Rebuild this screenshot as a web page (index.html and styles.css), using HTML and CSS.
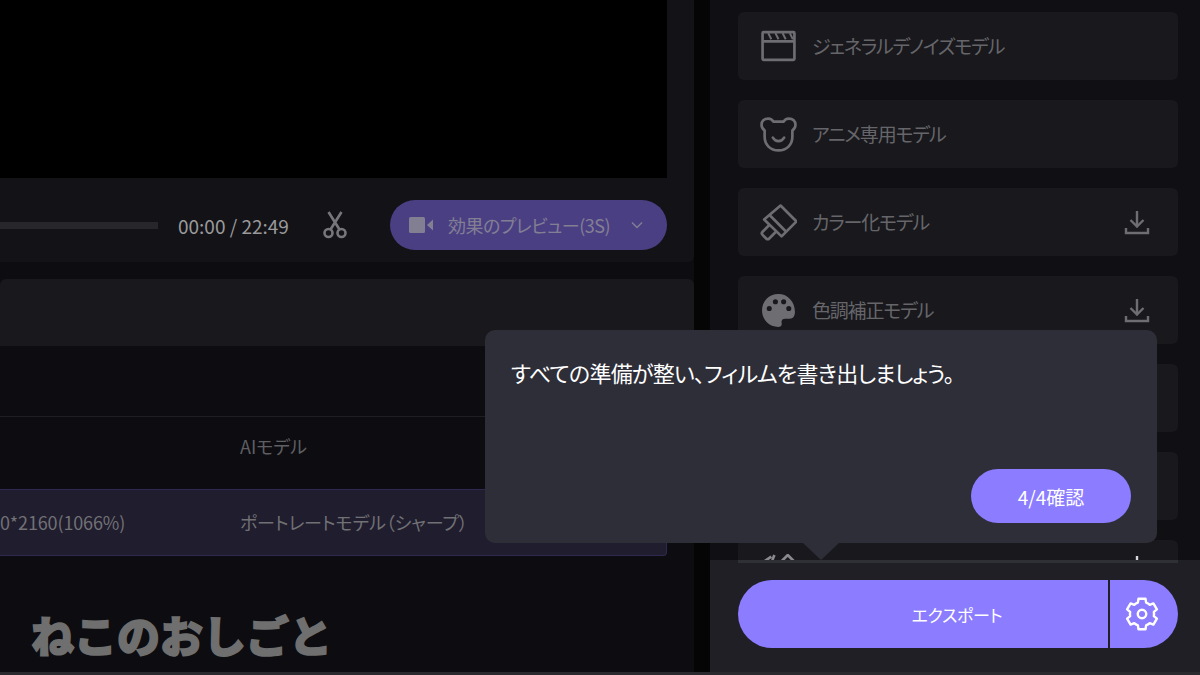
FILE: index.html
```html
<!DOCTYPE html>
<html lang="ja">
<head>
    <meta charset="UTF-8">
    <title>エクスポート</title>
    <link rel="stylesheet" href="styles.css">
</head>
<body>
    <div class="app">
        <div class="left">
            <div class="player">
                <div class="video"></div>
                <div class="controls">
                    <div class="progress"></div>
                    <span class="time">00:00 / 22:49</span>
                    <svg class="scissors" viewBox="0 0 28 28" fill="none" stroke="#77777b" stroke-width="2.6">
                        <circle cx="7.5" cy="22" r="4"/>
                        <circle cx="20.5" cy="22" r="4"/>
                        <path d="M9.5 18.5 20.5 1M18.5 18.5 7.5 1"/>
                    </svg>
                    <div class="preview">
                        <svg class="cam" viewBox="0 0 24 16" fill="#827f93">
                            <rect x="0" y="0" width="16" height="16" rx="1.5"/>
                            <path d="M18 8 24 2.5V13.5Z"/>
                        </svg>
                        <span class="preview-text">効果のプレビュー(3S)</span>
                        <svg class="chev" viewBox="0 0 12 8" fill="none" stroke="#827f93" stroke-width="1.4">
                            <path d="M1 1.5 6 6.5 11 1.5"/>
                        </svg>
                    </div>
                </div>
            </div>
            <div class="toolbar"></div>
            <div class="table">
                <div class="table-blank"></div>
                <div class="table-head">
                    <span class="cell-res"></span>
                    <span>AIモデル</span>
                </div>
                <div class="table-row">
                    <span class="cell-res">0*2160(1066%)</span>
                    <span>ポートレートモデル（シャープ）</span>
                </div>
            </div>
        </div>
        <div class="divider"></div>
        <div class="right">
            <div class="model-list">
                <div class="model">
                    <svg class="model-icon" viewBox="0 0 36 36" fill="none" stroke="#6e6e72" stroke-width="2.6">
                        <rect x="2.5" y="4" width="31" height="27" rx="1"/>
                        <path d="M2.5 13h31"/>
                        <path d="M8 5l3 6M15 5l3 6M22 5l3 6M29 5l3 6" stroke-width="2"/>
                    </svg>
                    <span class="model-name">ジェネラルデノイズモデル</span>
                </div>
                <div class="model">
                    <svg class="model-icon" viewBox="0 0 36 36" fill="none" stroke="#6e6e72" stroke-width="2.6" stroke-linejoin="round" stroke-linecap="round">
                        <path d="M8 2.5C4 2.5 1.500 5 1.500 8.500 1.500 11 3 13 4.500 14V20C4.500 28 10 33.500 18 33.500S31.500 28 31.500 20V14C33 13 34.500 11 34.500 8.500 34.500 5 32 2.500 28 2.500 25.500 2.500 24 3.500 23 5.500H13C12 3.500 10.500 2.500 8 2.500Z"/>
                        <path d="M12.500 21C14 23.500 16 24.500 18 24.500S22 23.500 23.500 21"/>
                    </svg>
                    <span class="model-name">アニメ専用モデル</span>
                </div>
                <div class="model">
                    <svg class="model-icon" viewBox="0 0 36 36" fill="none" stroke="#6e6e72" stroke-width="2.6" stroke-linejoin="round">
                        <path d="M20 1.500 35.500 17 21 31.500 4 15Z"/>
                        <path d="M9 10.500 25.500 27"/>
                        <path d="M9.500 20 2.500 27Q1 28.500 2.500 30L6 33.500Q7.500 35 9 33.500L16 26.500"/>
                    </svg>
                    <span class="model-name">カラー化モデル</span>
                    <svg class="download" viewBox="0 0 26 26" fill="none" stroke="#6e6e72" stroke-width="2.4">
                        <path d="M13 2V17M6.500 11 13 17.500 19.500 11"/>
                        <path d="M2 19V24H24V19"/>
                    </svg>
                </div>
                <div class="model">
                    <svg class="model-icon" viewBox="0 0 36 36">
                        <path fill="#6e6e72" fill-rule="evenodd" d="M18 2C8.500 2 2 9 2 18S9 34 18 34C21 34 21.500 32 21 30 20.500 27.500 22 26 24.500 26H29C32 26 34 23.500 34 19.500 34 9.500 27 2 18 2ZM9 13.500A2.500 2.500 0 1 0 9 18.500 2.500 2.500 0 1 0 9 13.500ZM15 7A2.500 2.500 0 1 0 15 12 2.500 2.500 0 1 0 15 7ZM23 7A2.500 2.500 0 1 0 23 12 2.500 2.500 0 1 0 23 7ZM28 13.500A2.500 2.500 0 1 0 28 18.500 2.500 2.500 0 1 0 28 13.500Z"/>
                    </svg>
                    <span class="model-name">色調補正モデル</span>
                    <svg class="download" viewBox="0 0 26 26" fill="none" stroke="#6e6e72" stroke-width="2.4">
                        <path d="M13 2V17M6.500 11 13 17.500 19.500 11"/>
                        <path d="M2 19V24H24V19"/>
                    </svg>
                </div>
                <div class="model"></div>
                <div class="model"></div>
                <div class="model model-cut">
                    <svg class="model-icon" viewBox="0 0 36 36" fill="none" stroke="#8a8a8e" stroke-width="2.6">
                        <path d="M3 8 11 2.500M14 1 12 6"/>
                        <path d="M22 6 27 1 32 6 27 11Z"/>
                    </svg>
                    <span class="model-name"></span>
                    <svg class="download" viewBox="0 0 26 26" fill="none" stroke="#d8d8da" stroke-width="2.4">
                        <path d="M13 2V17"/>
                    </svg>
                </div>
            </div>
            <div class="footer">
                <div class="footer-line"></div>
                <div class="export-group">
                    <button class="export">エクスポート</button>
                    <button class="settings">
                        <svg viewBox="0 0 24 24" fill="none" stroke="#fff" stroke-width="1.700" stroke-linejoin="round">
                            <path d="M9.090 4.010 9.530 1.280H14.470L14.910 4.010A8.500 8.500 0 0 1 17.460 5.490L20.040 4.500 22.520 8.780 20.370 10.520A8.500 8.500 0 0 1 20.370 13.480L22.520 15.220 20.040 19.500 17.460 18.510A8.500 8.500 0 0 1 14.910 19.990L14.470 22.720H9.530L9.090 19.990A8.500 8.500 0 0 1 6.540 18.510L3.960 19.500 1.480 15.220 3.630 13.480A8.500 8.500 0 0 1 3.630 10.520L1.480 8.780 3.960 4.500 6.540 5.490A8.500 8.500 0 0 1 9.090 4.010Z"/>
                            <circle cx="12" cy="12" r="3"/>
                        </svg>
                    </button>
                </div>
            </div>
        </div>
    </div>
    <div class="strip"></div>

    <div class="watermark">ねこのおしごと</div>

    <div class="tip">
        <p class="tip-text">すべての準備が整い、フィルムを書き出しましょう。</p>
        <button class="tip-btn">4/4確認</button>
        <div class="tip-arrow"></div>
    </div>
</body>
</html>
```

FILE: styles.css
```css
body {
    margin: 0;
    width: 1200px;
    height: 675px;
    overflow: hidden;
    position: relative;
    background-color: #2a2a2e;
    font-family: "Noto Sans CJK JP", "Noto Sans", sans-serif;
    font-feature-settings: "palt";
}
button {
    font-family: inherit;
    font-feature-settings: inherit;
    border: none;
    color: white;
    background-color: #8c7cff;
    padding: 0;
}
.app {
    display: flex;
    height: 672px;
}

/* left side */
.left {
    width: 694px;
    display: flex;
    flex-direction: column;
    background-color: #0d0d11;
}
.player {
    height: 262px;
    background-color: #131317;
    border-bottom-right-radius: 6px;
}
.video {
    width: 667px;
    height: 178px;
    background-color: #000;
}
.controls {
    box-sizing: border-box;
    display: flex;
    align-items: center;
    width: 667px;
    height: 84px;
    padding-top: 10px;
}
.progress {
    width: 158px;
    height: 7px;
    background-color: #26262b;
}
.time {
    margin-left: 20px;
    width: 110px;
    font-size: 19px;
    white-space: nowrap;
    color: #9a9a9c;
}
.scissors {
    width: 28px;
    height: 28px;
    margin-left: 33px;
    margin-right: 41px;
}
.preview {
    flex: 1;
    height: 50px;
    display: flex;
    align-items: center;
    background-color: #4b3f84;
    border-radius: 25px;
    padding-left: 19px;
}
.cam {
    width: 24px;
    height: 16px;
}
.preview-text {
    width: 160px;
    margin-left: 15px;
    font-size: 18px;
    letter-spacing: -0.5px;
    white-space: nowrap;
    color: #827f93;
}
.chev {
    width: 12px;
    height: 8px;
    margin-left: 23px;
}
.toolbar {
    height: 67px;
    margin-top: 17px;
    background-color: #18181d;
    border-radius: 6px 6px 0 0;
}
.table {
    flex: 1;
    margin-top: 2px;
    background-color: #0d0d11;
}
.table-blank {
    height: 68px;
    border-bottom: 1px solid #1e1e23;
}
.table-head {
    box-sizing: border-box;
    height: 72px;
    padding-bottom: 14px;
    display: flex;
    align-items: center;
    font-size: 18px;
    color: #5f5f63;
}
.table-row {
    box-sizing: border-box;
    width: 667px;
    height: 67px;
    padding-bottom: 2px;
    display: flex;
    align-items: center;
    font-size: 18px;
    letter-spacing: -0.15px;
    color: #717175;
    background-color: #201d2e;
    border: 1px solid #2e2950;
    border-left: none;
    border-radius: 0 4px 4px 0;
}
.cell-res {
    box-sizing: border-box;
    width: 240px;
    padding-right: 115px;
    text-align: right;
    white-space: nowrap;
}

.divider {
    width: 16px;
    background-color: #050506;
}

/* right side */
.right {
    width: 490px;
    display: flex;
    flex-direction: column;
    background-color: #101014;
}
.model-list {
    height: 548px;
    padding: 12px 22px 0 28px;
    overflow: hidden;
    display: flex;
    flex-direction: column;
    gap: 20px;
}
.model {
    flex: none;
    height: 68px;
    display: flex;
    align-items: center;
    padding: 0 28px 0 22px;
    background-color: #18181d;
    border-radius: 6px;
}
.model-icon {
    width: 37px;
    height: 37px;
    margin-right: 15px;
}
.model-name {
    flex: 1;
    margin-top: -2px;
    font-size: 19px;
    letter-spacing: -1.2px;
    color: #66666a;
}
.download {
    width: 26px;
    height: 26px;
}
.model-cut {
    align-items: flex-start;
    padding-top: 14px;
}
.footer {
    flex: 1;
    display: flex;
    flex-direction: column;
    padding: 0 22px 0 28px;
    background-color: #1f1f25;
}
.footer-line {
    height: 3px;
    margin-bottom: 17px;
    background-color: #2f2f36;
}
.export-group {
    display: flex;
    gap: 2px;
}
.export {
    width: 370px;
    height: 68px;
    padding-left: 68px;
    font-size: 17px;
    letter-spacing: -0.3px;
    border-radius: 34px 0 0 34px;
}
.settings {
    width: 68px;
    height: 68px;
    border-radius: 0 34px 34px 0;
    display: flex;
    align-items: center;
    justify-content: center;
    padding-right: 4px;
}
.settings svg {
    width: 34px;
    height: 34px;
}
.strip {
    height: 3px;
}

/* overlays */
.watermark {
    position: absolute;
    left: 31px;
    top: 604px;
    font-size: 43px;
    line-height: 60px;
    font-weight: 900;
    font-feature-settings: normal;
    white-space: nowrap;
    color: #6f6f6f;
    -webkit-text-stroke: 1.500px #6f6f6f;
}
.tip {
    position: absolute;
    left: 485px;
    top: 330px;
    box-sizing: border-box;
    width: 672px;
    height: 213px;
    background-color: #2e2e38;
    border-radius: 10px;
    padding: 27px 26px 20px 26px;
    display: flex;
    flex-direction: column;
    justify-content: space-between;
    align-items: flex-start;
}
.tip-text {
    margin: 0;
    font-size: 22px;
    line-height: 30px;
    letter-spacing: -0.75px;
    color: #fff;
}
.tip-btn {
    align-self: flex-end;
    width: 160px;
    height: 54px;
    border-radius: 27px;
    font-size: 19px;
}
.tip-arrow {
    position: absolute;
    left: 318px;
    top: 213px;
    width: 0;
    height: 0;
    border-left: 18px solid transparent;
    border-right: 18px solid transparent;
    border-top: 17px solid #2e2e38;
}
```
